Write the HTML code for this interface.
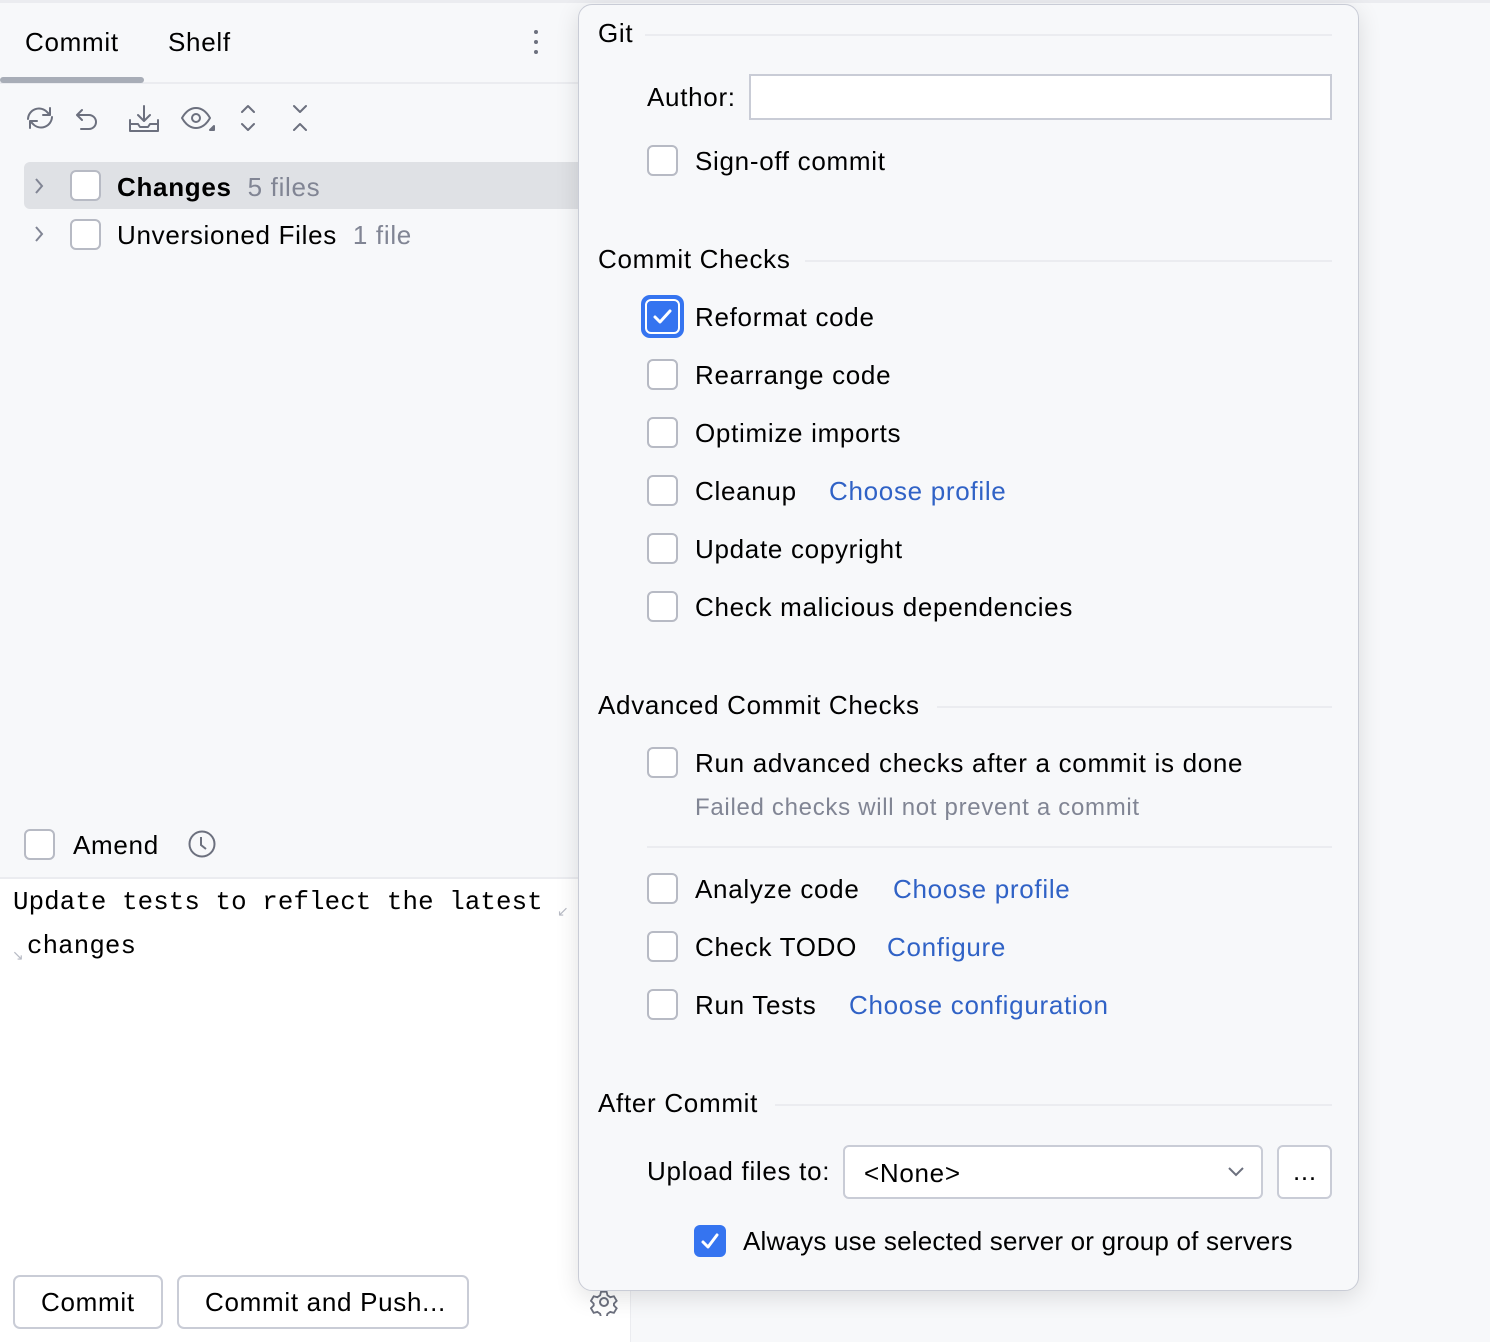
<!DOCTYPE html>
<html><head><meta charset="utf-8"><style>
*{margin:0;padding:0;box-sizing:border-box}
body{width:1490px;height:1342px;overflow:hidden;background:#f7f8fa;position:relative;font-family:"Liberation Sans",sans-serif;font-size:26px;color:#000}
.a{position:absolute;white-space:nowrap;line-height:30px;letter-spacing:0.7px}
.cb{position:absolute;width:31px;height:31px;border:2px solid #b7bac4;border-radius:6px;background:#fff}
.g{color:#818594}
.l{color:#3062c6}
.hr{position:absolute;height:2px;background:#ebecf0}
.ic{position:absolute}
</style></head><body>
<div style="position:absolute;left:0;top:0;width:1490px;height:3px;background:#ebecf0"></div>
<div class="a" style="left:25px;top:27px">Commit</div>
<div class="a" style="left:168px;top:27px">Shelf</div>
<div style="position:absolute;left:534px;top:30px;width:4px;height:4px;border-radius:2px;background:#6c707e;box-shadow:0 10px 0 #6c707e,0 20px 0 #6c707e"></div>
<div style="position:absolute;left:0;top:82px;width:580px;height:2px;background:#ebecf0"></div>
<div style="position:absolute;left:0;top:77px;width:144px;height:6px;border-radius:3px;background:#a8adb7"></div>
<svg class="ic" style="left:22px;top:100px" width="300" height="36" fill="none" stroke="#6c707e" stroke-width="2" stroke-linecap="round" stroke-linejoin="round">
<path d="M6 19a11 11 0 0 1 19-7l3 3M28 8v7h-7M30 17a11 11 0 0 1-19 7l-3-3M8 28v-7h7"/>
<path d="M60 10l-5 5 5 5M55 15h12a7 7 0 0 1 0 14h-8"/>
<path d="M122 6v15M116 15l6 6 6-6M108 20v11h28V20M108 24h8l2 3h8l2-3h8"/>
<path d="M160 18c4-7 9-10 14-10s10 3 14 10c-4 7-9 10-14 10s-10-3-14-10z"/><circle cx="174" cy="18" r="4"/>
<path d="M188 30l4-4v4z" fill="#6c707e"/>
<path d="M220 12l6-6 6 6M220 24l6 6 6-6"/>
<path d="M272 6l6 6 6-6M272 30l6-6 6 6"/>
</svg>
<div style="position:absolute;left:24px;top:162px;width:560px;height:47px;border-radius:6px;background:#dfe1e5"></div>
<svg class="ic" style="left:33px;top:176px" width="14" height="70" fill="none" stroke="#818594" stroke-width="2"><path d="M3 3l6 7-6 7M3 51l6 7-6 7"/></svg>
<div class="cb" style="left:70px;top:170px"></div>
<div class="a" style="left:117px;top:172px"><b>Changes</b> <span class="g">&nbsp;5 files</span></div>
<div class="cb" style="left:70px;top:219px"></div>
<div class="a" style="left:117px;top:220px">Unversioned Files <span class="g">&nbsp;1 file</span></div>
<div class="cb" style="left:24px;top:829px"></div>
<div class="a" style="left:73px;top:830px">Amend</div>
<svg class="ic" style="left:187px;top:829px" width="30" height="30" fill="none" stroke="#6c707e" stroke-width="2"><circle cx="15" cy="15" r="12.5"/><path d="M14 8v8l5 4"/></svg>
<div style="position:absolute;left:0;top:877px;width:580px;height:2px;background:#ebecf0"></div>
<div style="position:absolute;left:0;top:879px;width:630px;height:463px;background:#fff"></div>
<div style="position:absolute;left:630px;top:1290px;width:1px;height:52px;background:#ebecf0"></div>
<div class="a" style="left:13px;top:888px;font-family:'Liberation Mono',monospace;font-size:25.8px;letter-spacing:0.1px">Update tests to reflect the latest</div>
<div class="a" style="left:27px;top:932px;font-family:'Liberation Mono',monospace;font-size:25.8px;letter-spacing:0.1px">changes</div>
<div class="a" style="left:557px;top:896px;font-size:14px;color:#b7bac4">↙</div>
<div class="a" style="left:12px;top:940px;font-size:14px;color:#b7bac4">↘</div>
<div style="position:absolute;left:13px;top:1275px;width:150px;height:54px;border:2px solid #c9ccd6;border-radius:7px;background:#fff"></div>
<div class="a" style="left:41px;top:1287px">Commit</div>
<div style="position:absolute;left:177px;top:1275px;width:292px;height:54px;border:2px solid #c9ccd6;border-radius:7px;background:#fff"></div>
<div class="a" style="left:205px;top:1287px">Commit and Push...</div>
<svg class="ic" style="left:590px;top:1288px" width="28" height="28" fill="none" stroke="#6c707e" stroke-width="2"><path d="M11 3h6l1 4 3 2 4-1 3 5-3 3v2l3 3-3 5-4-1-3 2-1 4h-6l-1-4-3-2-4 1-3-5 3-3v-2l-3-3 3-5 4 1 3-2z" transform="scale(.92) translate(1 1)"/><circle cx="14" cy="14" r="4"/></svg>
<div style="position:absolute;left:578px;top:4px;width:781px;height:1287px;background:#f7f8fa;border:1px solid #c9ccd6;border-radius:14px;box-shadow:0 6px 24px rgba(0,0,0,.12)"></div>
<div class="a" style="left:598px;top:18px">Git</div><div class="hr" style="left:645px;top:34px;width:687px"></div>
<div class="a" style="left:647px;top:82px">Author:</div>
<div style="position:absolute;left:749px;top:74px;width:583px;height:46px;border:2px solid #c9ccd6;background:#fff"></div>
<div class="cb" style="left:647px;top:145px"></div><div class="a" style="left:695px;top:146px">Sign-off commit</div>
<div class="a" style="left:598px;top:244px">Commit Checks</div><div class="hr" style="left:805px;top:260px;width:527px"></div>
<div style="position:absolute;left:641px;top:295px;width:43px;height:43px;border-radius:9px;background:#3574f0"></div>
<div style="position:absolute;left:645px;top:299px;width:35px;height:35px;border-radius:6px;border:2px solid #fff;background:#3574f0"></div>
<svg class="ic" style="left:647px;top:301px" width="31" height="31" fill="none" stroke="#fff" stroke-width="3" stroke-linecap="round" stroke-linejoin="round"><path d="M8 16l5 5 10-11"/></svg>
<div class="a" style="left:695px;top:302px">Reformat code</div>
<div class="cb" style="left:647px;top:359px"></div><div class="a" style="left:695px;top:360px">Rearrange code</div>
<div class="cb" style="left:647px;top:417px"></div><div class="a" style="left:695px;top:418px">Optimize imports</div>
<div class="cb" style="left:647px;top:475px"></div><div class="a" style="left:695px;top:476px">Cleanup</div><div class="a l" style="left:829px;top:476px">Choose profile</div>
<div class="cb" style="left:647px;top:533px"></div><div class="a" style="left:695px;top:534px">Update copyright</div>
<div class="cb" style="left:647px;top:591px"></div><div class="a" style="left:695px;top:592px">Check malicious dependencies</div>
<div class="a" style="left:598px;top:690px">Advanced Commit Checks</div><div class="hr" style="left:937px;top:706px;width:395px"></div>
<div class="cb" style="left:647px;top:747px"></div><div class="a" style="left:695px;top:748px">Run advanced checks after a commit is done</div>
<div class="a g" style="left:695px;top:793px;font-size:24px">Failed checks will not prevent a commit</div>
<div class="hr" style="left:647px;top:846px;width:685px"></div>
<div class="cb" style="left:647px;top:873px"></div><div class="a" style="left:695px;top:874px">Analyze code</div><div class="a l" style="left:893px;top:874px">Choose profile</div>
<div class="cb" style="left:647px;top:931px"></div><div class="a" style="left:695px;top:932px">Check TODO</div><div class="a l" style="left:887px;top:932px">Configure</div>
<div class="cb" style="left:647px;top:989px"></div><div class="a" style="left:695px;top:990px">Run Tests</div><div class="a l" style="left:849px;top:990px">Choose configuration</div>
<div class="a" style="left:598px;top:1088px">After Commit</div><div class="hr" style="left:775px;top:1104px;width:557px"></div>
<div class="a" style="left:647px;top:1156px">Upload files to:</div>
<div style="position:absolute;left:843px;top:1145px;width:420px;height:54px;border:2px solid #c9ccd6;border-radius:6px;background:#fff"></div>
<div class="a" style="left:864px;top:1158px">&lt;None&gt;</div>
<svg class="ic" style="left:1227px;top:1166px" width="18" height="12" fill="none" stroke="#6c707e" stroke-width="2"><path d="M2 2l7 7 7-7"/></svg>
<div style="position:absolute;left:1277px;top:1145px;width:55px;height:54px;border:2px solid #c9ccd6;border-radius:6px;background:#fff"></div>
<div class="a" style="left:1293px;top:1156px">...</div>
<div style="position:absolute;left:694px;top:1225px;width:32px;height:32px;border-radius:6px;background:#3574f0"></div>
<svg class="ic" style="left:694px;top:1225px" width="32" height="32" fill="none" stroke="#fff" stroke-width="3" stroke-linecap="round" stroke-linejoin="round"><path d="M9 17l5 5 9-12"/></svg>
<div class="a" style="left:743px;top:1226px;letter-spacing:0.2px">Always use selected server or group of servers</div>
</body></html>
